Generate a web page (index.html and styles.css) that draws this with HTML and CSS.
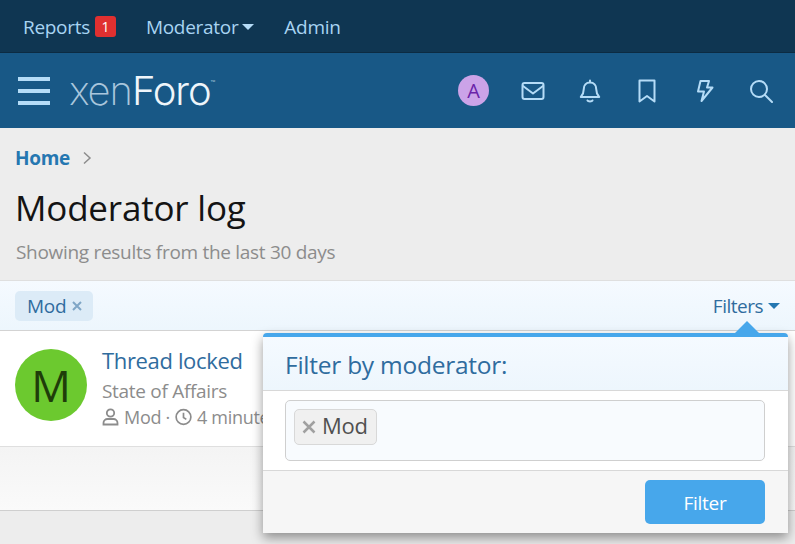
FILE: index.html
```html
<!DOCTYPE html>
<html lang="en">
<head>
    <meta charset="UTF-8">
    <title>Moderator log</title>
    <link rel="stylesheet" href="styles.css">
</head>
<body>
    <nav class="staff-bar">
        <a class="staff-link">Reports <span class="badge">1</span></a>
        <a class="staff-link">Moderator<span class="caret caret-light"></span></a>
        <a class="staff-link">Admin</a>
    </nav>
    <header class="site-header">
        <div class="burger"><span></span><span></span><span></span></div>
        <div class="logo">xen<b>Foro</b><sup>™</sup></div>
        <div class="header-icons">
            <span class="avatar-small">A</span>
            <svg class="icon" viewBox="0 0 24 24"><rect x="1.5" y="4" width="21" height="16" rx="2"/><path d="M2 7l10 7.5L22 7"/></svg>
            <svg class="icon" viewBox="0 0 24 24"><path d="M12 1.500v2M12 3.500c-4 0-6.200 3-6.200 6.500 0 4.500-1.300 6-3 8h18.400c-1.700-2-3-3.500-3-8 0-3.500-2.200-6.500-6.200-6.500zM9.500 21.500c.6 1.200 4.400 1.200 5 0"/></svg>
            <svg class="icon" viewBox="0 0 24 24"><path d="M4.500 1.500h15v21L12 17l-7.500 5.500z"/></svg>
            <svg class="icon" viewBox="0 0 24 24"><path d="M8.500 2h8.500l-2 6.500h5.500L9.500 22l2.500-9.500H6z"/></svg>
            <svg class="icon" viewBox="0 0 24 24"><circle cx="10" cy="10" r="8"/><path d="M16 16l7 7"/></svg>
        </div>
    </header>

    <main>
        <div class="breadcrumb"><a>Home</a><svg viewBox="0 0 10 14"><path d="M2 1.500L8 7l-6 5.500"/></svg></div>
        <h1>Moderator log</h1>
        <p class="description">Showing results from the last 30 days</p>

        <section class="block">
            <div class="filter-bar">
                <span class="filter-tag">Mod<svg viewBox="0 0 10 10"><path d="M1 1l8 8M9 1l-8 8"/></svg></span>
                <a class="filter-toggle">Filters<span class="caret caret-blue"></span></a>
            </div>
            <div class="log-row">
                <div class="avatar">M</div>
                <div class="log-text">
                    <a class="log-title">Thread locked</a>
                    <div class="log-sub">State of Affairs</div>
                    <div class="log-meta">
                        <svg viewBox="0 0 16 18"><circle cx="8" cy="5" r="3.700"/><path d="M1 16.500v-1.500c0-2.500 2-4 4-4h6c2 0 4 1.500 4 4v1.500z"/></svg>
                        <span>Mod ·</span>
                        <svg viewBox="0 0 18 18"><circle cx="9" cy="9" r="7.800"/><path d="M9 4.500V9.500l3 2"/></svg>
                        <span>4 minutes ago</span>
                    </div>
                </div>
            </div>
            <div class="block-footer"></div>
        </section>

        <div class="menu">
            <span class="menu-arrow"></span>
            <h3 class="menu-title">Filter by moderator:</h3>
            <div class="menu-body">
                <div class="token-input">
                    <span class="token"><svg viewBox="0 0 14 14"><path d="M1.500 1.500l11 11M12.500 1.500l-11 11"/></svg>Mod</span>
                </div>
            </div>
            <div class="menu-footer">
                <button class="button-primary">Filter</button>
            </div>
        </div>
    </main>
</body>
</html>
```
FILE: styles.css
```css
* {
    margin: 0;
    padding: 0;
    box-sizing: border-box;
}

html, body {
    height: 100%;
    overflow: hidden;
}

body {
    font-family: 'Open Sans', 'Noto Sans', sans-serif;
    background-color: #ededed;
    color: #141414;
    font-size: 19px;
    letter-spacing: -0.3px;
}

/* Top staff bar */
.staff-bar {
    height: 53px;
    background-color: #0f3652;
    border-bottom: 1px solid #0c2b42;
    display: flex;
    align-items: center;
    padding: 1px 0 0 23px;
    gap: 30px;
}

.staff-link {
    color: #a8d4f2;
    display: flex;
    align-items: center;
    gap: 5px;
}

.badge {
    background-color: #e03030;
    color: #fff;
    font-size: 14px;
    line-height: 21px;
    width: 21px;
    text-align: center;
    border-radius: 3px;
}

.caret {
    display: inline-block;
    width: 0;
    height: 0;
    border-left: 6px solid transparent;
    border-right: 6px solid transparent;
    margin-left: -1px;
}

.caret-light {
    border-top: 6px solid #b5dcf7;
}

.caret-blue {
    border-top: 6px solid #2577b1;
    margin-left: 5px;
}

/* Main header */
.site-header {
    height: 75px;
    background-color: #185886;
    display: flex;
    align-items: center;
    padding: 0 22px 0 18px;
}

.burger {
    width: 32px;
    display: flex;
    flex-direction: column;
    gap: 8px;
}

.burger span {
    display: block;
    height: 4px;
    background-color: #b5dcf7;
}

.logo {
    margin-left: 19px;
    font-family: 'Inter', sans-serif;
    font-size: 40px;
    font-weight: 200;
    letter-spacing: -1.1px;
    color: #a9c6dc;
    display: flex;
    line-height: 1;
}

.logo b {
    font-weight: 300;
    color: #eef5fa;
}

.logo sup {
    font-size: 8px;
    color: #cfe0ec;
    margin-top: 8px;
}

.header-icons {
    margin-left: auto;
    display: flex;
    align-items: center;
    gap: 33px;
}

.icon {
    width: 24px;
    height: 24px;
    fill: none;
    stroke: #b5dcf7;
    stroke-width: 2;
    stroke-linejoin: round;
    stroke-linecap: round;
}

.avatar-small {
    width: 31px;
    height: 31px;
    margin-right: -1px;
    border-radius: 50%;
    background-color: #cba3e8;
    color: #6a24a8;
    font-size: 20px;
    line-height: 31px;
    text-align: center;
}

/* Page title area */
main {
    position: relative;
}

.breadcrumb {
    padding: 8px 15px 0;
    height: 51px;
    display: flex;
    align-items: center;
    gap: 12px;
    font-weight: 700;
    color: #2577b1;
}

.breadcrumb svg {
    width: 10px;
    height: 14px;
    fill: none;
    stroke: #8c8c8c;
    stroke-width: 1.500;
}

h1 {
    font-size: 35px;
    font-weight: 400;
    line-height: 46px;
    padding: 6px 15px 0;
    letter-spacing: -0.2px;
}

.description {
    color: #8c8c8c;
    line-height: 24px;
    padding: 9px 16px 16px;
}

/* Log block */
.block {
    background-color: #fff;
    border-top: 1px solid #dfdfdf;
    border-bottom: 1px solid #cfcfcf;
}

.filter-bar {
    height: 50px;
    padding: 0 15px;
    background: linear-gradient(to bottom, #f5faff, #edf6fd);
    border-bottom: 1px solid #d3d3d3;
    display: flex;
    align-items: center;
    justify-content: space-between;
}

.filter-tag {
    background-color: #dcebf7;
    color: #2f6c9e;
    height: 30px;
    line-height: 30px;
    padding: 0 11px 0 12px;
    border-radius: 5px;
    display: flex;
    align-items: center;
    gap: 6px;
}

.filter-tag svg {
    width: 10px;
    height: 10px;
    fill: none;
    stroke: #7fa6c6;
    stroke-width: 2;
}

.filter-toggle {
    color: #2f6c9e;
    display: flex;
    align-items: center;
    letter-spacing: -0.5px;
}

.log-row {
    height: 116px;
    padding: 16px 15px 0;
    display: flex;
    gap: 15px;
    border-bottom: 1px solid #dfdfdf;
}

.avatar {
    width: 72px;
    height: 72px;
    margin-top: 2px;
    border-radius: 50%;
    background-color: #6cc92f;
    color: #1f3d0a;
    font-size: 44px;
    line-height: 72px;
    text-align: center;
    flex-shrink: 0;
}

.log-title {
    display: block;
    color: #2f6c9e;
    font-size: 22px;
    line-height: 26px;
    letter-spacing: -0.35px;
}

.log-sub {
    color: #8c8c8c;
    line-height: 24px;
    margin-top: 6px;
}

.log-meta {
    color: #8c8c8c;
    font-size: 18px;
    line-height: 24px;
    margin-top: 2px;
    display: flex;
    align-items: center;
    gap: 5px;
    white-space: nowrap;
}

.log-meta svg {
    width: 17px;
    height: 18px;
    fill: none;
    stroke: #8c8c8c;
    stroke-width: 1.800;
}

.block-footer {
    height: 63px;
    background: linear-gradient(to bottom, #f4f4f4, #fafafa);
}

/* Filter menu */
.menu {
    position: absolute;
    top: 205px;
    left: 263px;
    width: 525px;
    height: 200px;
    background-color: #fff;
    border-top: 4px solid #47a7eb;
    border-radius: 4px 4px 0 0;
    box-shadow: 0 5px 12px rgba(0, 0, 0, 0.4);
}

.menu-arrow {
    position: absolute;
    top: -16px;
    left: 472px;
    width: 0;
    height: 0;
    border-left: 12px solid transparent;
    border-right: 12px solid transparent;
    border-bottom: 12px solid #47a7eb;
}

.menu-title {
    height: 54px;
    padding: 3px 0 0 22px;
    font-size: 24.500px;
    font-weight: 400;
    line-height: 50px;
    letter-spacing: -0.25px;
    color: #2f6c9e;
    background: linear-gradient(to bottom, #f5faff, #edf6fd);
    border-bottom: 1px solid #d8d8d8;
}

.menu-body {
    height: 80px;
    padding: 9px 23px 9px 22px;
    border-bottom: 1px solid #d8d8d8;
}

.token-input {
    height: 61px;
    background-color: #f8fbfe;
    border: 1px solid #cfcfcf;
    border-radius: 5px;
    padding: 8px;
}

.token {
    display: inline-flex;
    align-items: center;
    gap: 6px;
    height: 36px;
    padding: 0 8px 4px 7px;
    background-color: #f0f0f0;
    border: 1px solid #d8d8d8;
    border-radius: 5px;
    color: #505050;
    font-size: 22px;
}

.token svg {
    width: 14px;
    height: 14px;
    margin-top: 4px;
    fill: none;
    stroke: #a0a0a0;
    stroke-width: 2.500;
}

.menu-footer {
    height: 62px;
    background-color: #f6f6f6;
    padding: 9px 23px;
    display: flex;
    justify-content: flex-end;
}

.button-primary {
    width: 120px;
    height: 44px;
    padding-top: 2px;
    background-color: #47a7eb;
    color: #fff;
    border: none;
    border-radius: 5px;
    font-family: inherit;
    font-size: 19px;
    letter-spacing: -0.3px;
}
```
